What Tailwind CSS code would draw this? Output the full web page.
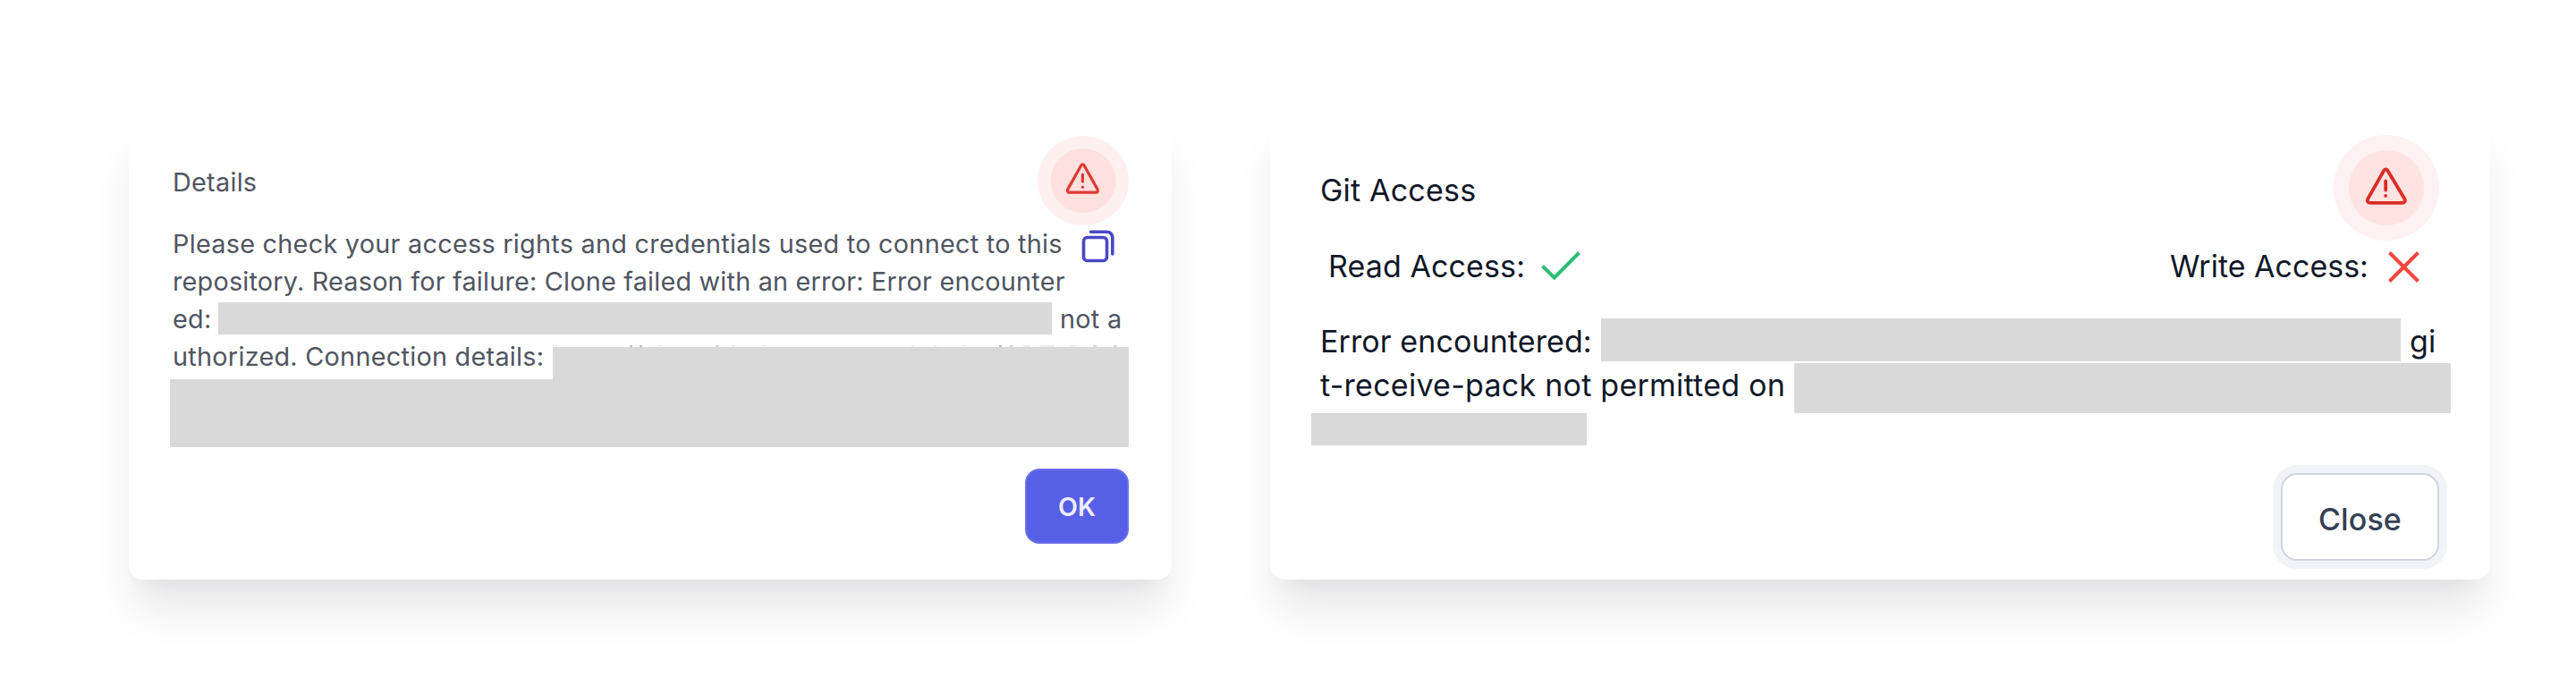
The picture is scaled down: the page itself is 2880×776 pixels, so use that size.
<!DOCTYPE html>
<html lang="en">
<head>
<meta charset="utf-8">
<title>Repository access</title>
<script src="https://cdn.jsdelivr.net/npm/@tailwindcss/browser@4"></script>
</head>
<body class="bg-white">
<main class="flex h-[776px] w-[2880px] items-start gap-[110px] pt-32 pl-36 font-['Inter',sans-serif]">

  <!-- Details dialog -->
  <section class="flex h-[520px] w-[1166px] flex-col rounded-2xl bg-white pt-6 pr-12 pl-[46px] text-[28.800px] leading-[42px] tracking-[0.270px] text-[#4f5561] shadow-[0_40px_48px_-8px_rgba(16,24,40,0.1),0_16px_16px_-8px_rgba(16,24,40,0.03)]">
    <header class="flex h-[100px] justify-between pl-[3px]">
      <h2 class="mt-[31px] whitespace-nowrap">Details</h2>
      <svg class="h-[100px] w-[102px]" viewBox="0 0 102 100" fill="none">
        <ellipse cx="51" cy="50" rx="51" ry="50" fill="#fef0ef"/>
        <ellipse cx="51" cy="50" rx="36.5" ry="36" fill="#fee0de"/>
        <path d="M48.7 33 33.8 59.6C32.8 61.6 33.6 63.2 35.8 63.2H65C67.200 63.2 68 61.6 67 59.600L52.100 33C51.300 31.600 49.500 31.600 48.700 33ZM50.400 43V51M50.400 57.200V57.300" stroke="#dc3a30" stroke-width="3.200" stroke-linecap="round" stroke-linejoin="round"/>
      </svg>
    </header>
    <div class="flex h-[42px] pl-[3px]">
      <p class="w-[1016px] whitespace-nowrap">Please check your access rights and credentials used to connect to this</p>
      <svg class="mt-[5px] h-[37px] w-[37px] shrink-0" viewBox="0 0 37 37" fill="none" stroke="#4a47c6" stroke-width="3.600">
        <rect x="2.500" y="8.500" width="26" height="26" rx="4"/>
        <path d="M10.500 2.300H27.500Q34.800 2.300 34.800 9.500V27" stroke-linecap="round"/>
      </svg>
    </div>
    <p class="h-[42px] pl-[3px] tracking-[0.210px] whitespace-nowrap">repository. Reason for failure: Clone failed with an error: Error encounter</p>
    <div class="flex h-[42px] pl-[3px]">
      <span class="w-[51px]">ed:</span>
      <div class="mt-0.5 h-9 w-[932px] shrink-0 bg-[#d9d9d9]"></div>
      <span class="ml-[9px] whitespace-nowrap">not a</span>
    </div>
    <div class="flex h-[46px] justify-between pl-[3px]">
      <span class="whitespace-nowrap">uthorized. Connection details:</span>
      <!-- Redaction bar with the ascender tips that stay visible above it -->
      <svg class="mt-2 h-[38px] w-[644px] shrink-0" viewBox="0 0 644 38" fill="none" stroke-width="2">
        <path d="M0 20H644" stroke="#d9d9d9" stroke-width="36"/>
        <path d="M86 1h3M97 1h3M499 1h3" stroke="#bcbcbc"/>
        <path d="M182 1h4M511 1h4M604 1h4M627 1h4" stroke="#d8d8d8"/>
        <path d="M2 1h3M118 1h4M200 1h4M234 1h4M401 1h3M426 1h3M458 1h4M526 1h8M545 1h16M577 1h9" stroke="#eeeeee"/>
      </svg>
    </div>
    <div class="h-[76px] bg-[#d9d9d9]"></div>
    <button class="mt-6 h-[84px] w-[116px] self-end rounded-2xl border-2 border-[#6a70ea] bg-[#575fe6] pt-0.5 text-[28.500px] font-semibold tracking-normal text-[#eeeefc]">OK</button>
  </section>

  <!-- Git access dialog -->
  <section class="flex h-[520px] w-[1364px] flex-col rounded-2xl bg-white pt-[23px] pl-[46px] text-[34px] leading-[49px] tracking-[0.100px] text-[#101828] shadow-[0_40px_48px_-8px_rgba(16,24,40,0.1),0_16px_16px_-8px_rgba(16,24,40,0.03)]">
    <header class="flex h-[122px] justify-between pr-[57px] pl-[10px]">
      <h2 class="mt-[37px] tracking-[0.200px] whitespace-nowrap">Git Access</h2>
      <svg class="size-[118px]" viewBox="0 0 118 118" fill="none">
        <circle cx="59" cy="59" r="59" fill="#fef1f1"/>
        <circle cx="59" cy="59" r="42" fill="#fee3e2"/>
        <path d="M56.300 39.600 38.300 71.200C37.100 73.400 38 75.800 40.500 75.800H77.100C79.600 75.800 80.500 73.400 79.300 71.200L60.300 39.600C59.300 38 57.300 38 56.300 39.600ZM58.200 51.500V61.500M58.200 67.800V67.900" stroke="#dc2b26" stroke-width="3.800" stroke-linecap="round" stroke-linejoin="round"/>
      </svg>
    </header>
    <div class="flex h-[83px] justify-between pr-[79px] pl-[19px]">
      <div class="flex">
        <span class="w-[238px] whitespace-nowrap">Read Access:</span>
        <svg class="mt-[8px] h-8 w-[44px]" viewBox="0 0 44 32" fill="none" stroke="#2dbd78" stroke-width="4"><path d="M1.500 16.500 14.800 29.500 42.500 1.500"/></svg>
      </div>
      <div class="flex">
        <span class="w-[244px] tracking-normal whitespace-nowrap">Write Access:</span>
        <svg class="mt-[8px] size-[35px]" viewBox="0 0 35 35" fill="none" stroke="#f4453c" stroke-width="4"><path d="M1.500 1.500 33.500 33.500M33.500 1.500 1.500 33.500"/></svg>
      </div>
    </div>
    <div class="flex h-[50px] pl-[10px]">
      <span class="mt-px w-[314px] whitespace-nowrap">Error encountered:</span>
      <div class="h-12 w-[894px] bg-[#d9d9d9]"></div>
      <span class="mt-px ml-[10px]">gi</span>
    </div>
    <div class="flex h-14 pl-[10px]">
      <span class="w-[530px] tracking-[0.250px] whitespace-nowrap">t-receive-pack not permitted on</span>
      <div class="h-14 w-[734px] bg-[#d9d9d9]"></div>
    </div>
    <div class="h-9 w-[308px] bg-[#d9d9d9]"></div>
    <button class="mt-[31px] mr-[57px] h-[98px] w-[177px] self-end rounded-[18px] border-2 border-[#d0d5dd] bg-white pt-1 font-medium text-[#344054] shadow-[0_0_0_9px_#f2f3f8]">Close</button>
  </section>
</main>
</body>
</html>
